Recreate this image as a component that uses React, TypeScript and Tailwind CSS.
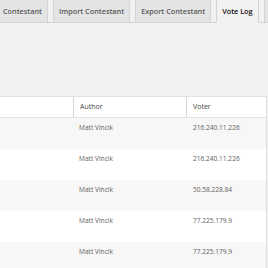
import React from "react";

// ─── Vote Log screen ─────────────────────────────────────────────────────────

const tabs = [
  { label: "Contestant", active: false },
  { label: "Import Contestant", active: false },
  { label: "Export Contestant", active: false },
  { label: "Vote Log", active: true },
  { label: "Contest Settings", active: false },
];

const votes = [
  { author: "Matt Vincik", voter: "216.240.11.226" },
  { author: "Matt Vincik", voter: "216.240.11.226" },
  { author: "Matt Vincik", voter: "50.58.228.84" },
  { author: "Matt Vincik", voter: "77.225.179.9" },
  { author: "Matt Vincik", voter: "77.225.179.9" },
];

export default function App() {
  return (
    <div className="w-[268px] h-[268px] overflow-hidden bg-[#f1f1f1] font-['Open_Sans',sans-serif]">
      {/* Tabs */}
      <div className="flex items-end h-[23px] border-b border-[#d4d4d4] ml-[-3px] whitespace-nowrap">
        {tabs.map((t) => (
          <div
            key={t.label}
            className={
              t.active
                ? "mr-[5px] px-[5px] h-[24px] mb-[-1px] flex items-center border border-[#d4d4d4] border-b-[#f1f1f1] bg-[#f1f1f1] text-[7.3px] font-semibold text-[#111111] shrink-0"
                : "mr-[5px] px-[5px] h-[23px] flex items-center border border-b-0 border-[#d4d4d4] bg-[#e4e4e4] text-[7.3px] font-semibold text-[#5a5a5a] shrink-0"
            }
          >
            {t.label}
          </div>
        ))}
      </div>

      {/* Table */}
      <div className="mt-[73px] ml-[-1px] w-[268px] border border-[#e1e1e1] bg-white">
        <div className="grid grid-cols-[74px_113px_79px] h-[21px] border-b border-[#e1e1e1] text-[7px] text-[#444444]">
          <div className="border-r border-[#d6d6d6]" />
          <div className="border-r border-[#d6d6d6] pl-[6px] flex items-center">Author</div>
          <div className="pl-[6px] flex items-center">Voter</div>
        </div>
        {votes.map((v, i) => (
          <div
            key={i}
            className={
              (i % 2 === 0 ? "bg-[#f7f7f7] " : "bg-white ") +
              "grid grid-cols-[74px_113px_79px] h-[31px] pt-[5px] text-[6.6px] text-[#606060] leading-[9px]"
            }
          >
            <div />
            <div className="pl-[5px]">{v.author}</div>
            <div className="pl-[6px]">{v.voter}</div>
          </div>
        ))}
      </div>
    </div>
  );
}
